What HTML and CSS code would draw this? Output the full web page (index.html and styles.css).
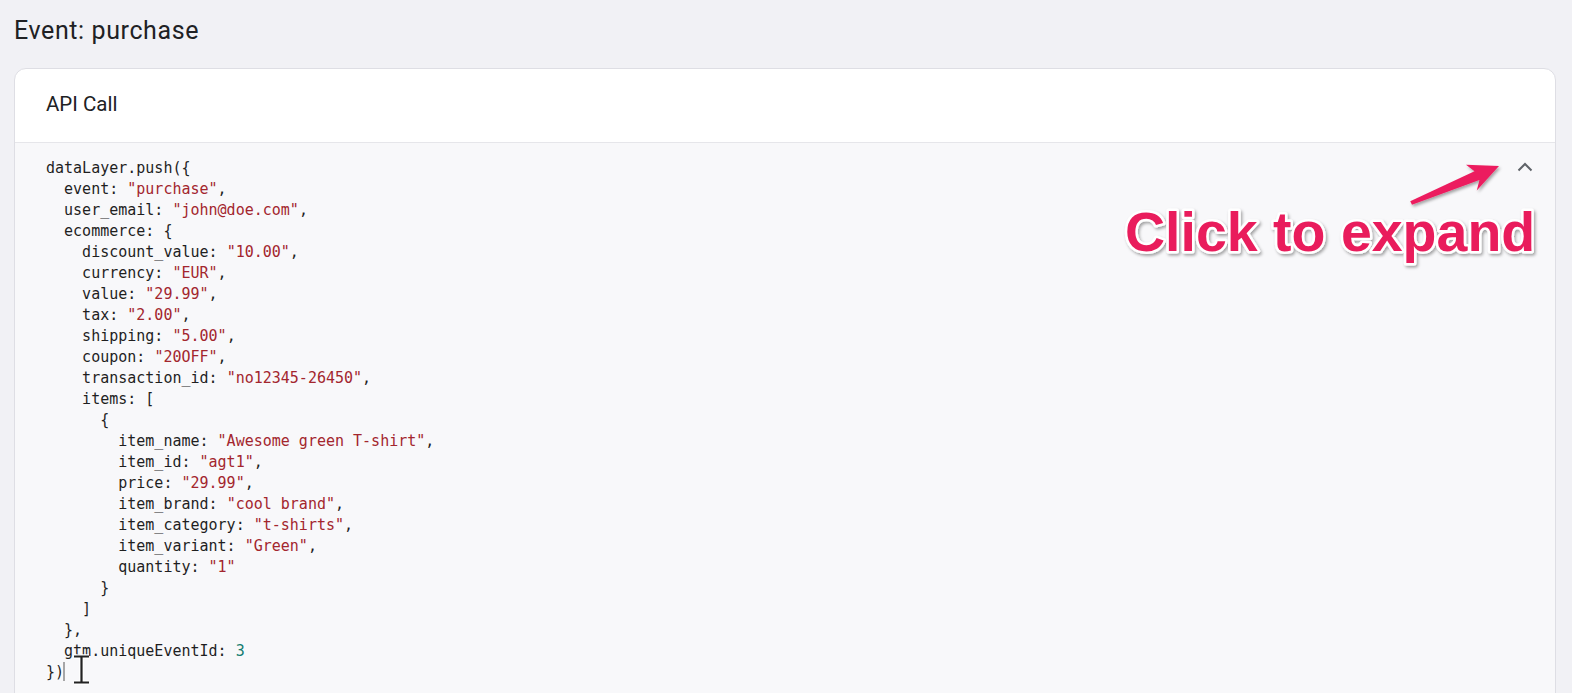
FILE: index.html
```html
<!DOCTYPE html>
<html lang="en">
<head>
<meta charset="utf-8">
<title>Event: purchase</title>
<link rel="stylesheet" href="styles.css">
</head>
<body>
<h1 class="page-title">Event: purchase</h1>
<section class="card">
  <header class="card-header">API Call</header>
  <div class="code-block">
<pre class="code">dataLayer.push({
  event: <span class="str">"purchase"</span>,
  user_email: <span class="str">"john@doe.com"</span>,
  ecommerce: {
    discount_value: <span class="str">"10.00"</span>,
    currency: <span class="str">"EUR"</span>,
    value: <span class="str">"29.99"</span>,
    tax: <span class="str">"2.00"</span>,
    shipping: <span class="str">"5.00"</span>,
    coupon: <span class="str">"20OFF"</span>,
    transaction_id: <span class="str">"no12345-26450"</span>,
    items: [
      {
        item_name: <span class="str">"Awesome green T-shirt"</span>,
        item_id: <span class="str">"agt1"</span>,
        price: <span class="str">"29.99"</span>,
        item_brand: <span class="str">"cool brand"</span>,
        item_category: <span class="str">"t-shirts"</span>,
        item_variant: <span class="str">"Green"</span>,
        quantity: <span class="str">"1"</span>
      }
    ]
  },
  gtm.uniqueEventId: <span class="num">3</span>
})</pre>
    <button class="toggle" aria-label="Collapse">
      <svg width="16" height="10" viewBox="0 0 16 10"><path d="M1.5 8.5 L8 2 L14.5 8.5" fill="none" stroke="#5f6368" stroke-width="2"/></svg>
    </button>
  </div>
</section>

<svg class="overlay" width="1572" height="693" viewBox="0 0 1572 693">
  <defs>
    <filter id="sh" x="-10%" y="-30%" width="120%" height="160%">
      <feDropShadow dx="1.5" dy="2" stdDeviation="1.5" flood-color="#000" flood-opacity="0.35"/>
    </filter>
  </defs>
  <line x1="64" y1="662" x2="64" y2="681" stroke="#555" stroke-width="1"/>
  <path d="M74 656.5 H89 M81.5 656.5 V682.5 M74 682.5 H89" fill="none" stroke="#fff" stroke-width="4.5"/>
  <path d="M74 656.5 H89 M81.5 656.5 V682.5 M74 682.5 H89" fill="none" stroke="#222" stroke-width="2.2"/>
  <polygon filter="url(#sh)" fill="#ec1f5f"
    points="1410.2,201.2 1474.5,171.3 1466,164.7 1499,166 1476.8,190.5 1479.4,179.9 1412,204.8"/>
  <text class="label" x="1125" y="251" filter="url(#sh)">Click to expand</text>
</svg>
</body>
</html>
```

FILE: styles.css
```css
html, body {
  margin: 0;
  padding: 0;
}

body {
  background: #f1f1f5;
  font-family: Roboto, "Noto Sans", Arial, sans-serif;
  color: #202124;
  width: 1572px;
  height: 693px;
  overflow: hidden;
  position: relative;
}

.page-title {
  margin: 0;
  padding: 16px 0 0 14px;
  font-size: 25px;
  font-weight: 400;
  letter-spacing: 0.6px;
  line-height: 29px;
  color: #202124;
}

.card {
  margin: 23px 16px 0 14px;
  background: #ffffff;
  border: 1px solid #dedee4;
  border-radius: 12px;
  overflow: hidden;
}

.card-header {
  display: flex;
  align-items: center;
  padding: 0 31px 3px;
  font-size: 20.5px;
  color: #202124;
  border-bottom: 1px solid #e6e6ea;
  box-sizing: border-box;
  height: 74px;
}

.code-block {
  background: #f8f8fa;
  display: flex;
  align-items: flex-start;
  padding: 15px 18px 40px 31px;
}

.code {
  flex: 1;
  margin: 0;
  font-family: "DejaVu Sans Mono", "Liberation Mono", monospace;
  font-size: 15px;
  line-height: 21px;
  color: #1f1f1f;
}

.str {
  color: #a3262e;
}

.num {
  color: #137d70;
}

.toggle {
  width: 24px;
  height: 24px;
  margin-top: -3px;
  padding: 0;
  border: 0;
  background: transparent;
  display: flex;
  align-items: center;
  justify-content: center;
}

.overlay {
  position: absolute;
  left: 0;
  top: 0;
  pointer-events: none;
}

.label {
  font-family: "Liberation Sans", Arial, sans-serif;
  font-weight: 700;
  font-size: 55.5px;
  fill: #e91e5b;
  stroke: #ffffff;
  stroke-width: 5px;
  stroke-linejoin: round;
  paint-order: stroke fill;
}
```
